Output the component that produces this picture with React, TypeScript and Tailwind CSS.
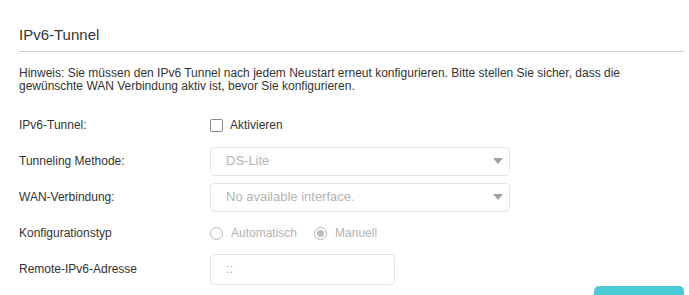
const font = { fontFamily: '"Liberation Sans", Arial, sans-serif' };

function Caret() {
    return (
        <svg width="10" height="6" viewBox="0 0 10 6" className="absolute right-[6px] top-1/2 -translate-y-1/2">
            <path d="M0 0h10L5 6z" fill="#a0a0a0" />
        </svg>
    );
}

function Select({ value }: { value: string }) {
    return (
        <div className="relative flex h-[29px] w-[300px] items-center rounded-[4px] border border-[#e4e4e4] pl-[15px] text-[13px] text-[#b3b3b3]">
            {value}
            <Caret />
        </div>
    );
}

function Radio({ checked, label }: { checked?: boolean; label: string }) {
    return (
        <label className="flex items-center gap-[8px] text-[12px] text-[#b3b3b3]">
            <span className="flex h-[13px] w-[13px] items-center justify-center rounded-full border border-[#b9b9b9]">
                {checked && <span className="h-[7px] w-[7px] rounded-full bg-[#bdbdbd]" />}
            </span>
            {label}
        </label>
    );
}

function Row({ label, children }: { label: string; children: React.ReactNode }) {
    return (
        <div className="flex h-[36px] items-center">
            <div className="w-[191px] text-[12px] text-[#333]">{label}</div>
            {children}
        </div>
    );
}

export default function App() {
    return (
        <div className="relative h-[295px] w-[689px] overflow-hidden bg-white pl-[19px] pr-[5px]" style={font}>
            <div className="border-b border-[#cccccc] pb-[6px] pt-[25px] text-[15px] leading-[20px] text-[#333]">
                IPv6-Tunnel
            </div>
            <p className="mt-[15px] text-[12px] leading-[13px] text-[#333]">
                Hinweis: Sie müssen den IPv6 Tunnel nach jedem Neustart erneut konfigurieren. Bitte stellen Sie sicher, dass die
                <br />
                gewünschte WAN Verbindung aktiv ist, bevor Sie konfigurieren.
            </p>
            <div className="mt-[14px]">
                <Row label="IPv6-Tunnel:">
                    <label className="flex items-center gap-[7px] text-[12px] text-[#333]">
                        <span className="h-[13px] w-[13px] rounded-[2px] border border-[#8a8a8a]" />
                        Aktivieren
                    </label>
                </Row>
                <Row label="Tunneling Methode:">
                    <Select value="DS-Lite" />
                </Row>
                <Row label="WAN-Verbindung:">
                    <Select value="No available interface." />
                </Row>
                <Row label="Konfigurationstyp">
                    <div className="flex items-center gap-[17px]">
                        <Radio label="Automatisch" />
                        <Radio checked label="Manuell" />
                    </div>
                </Row>
                <Row label="Remote-IPv6-Adresse">
                    <div className="flex h-[31px] w-[185px] items-center rounded-[4px] border border-[#e4e4e4] pl-[15px] text-[13px] text-[#b3b3b3]">
                        ::
                    </div>
                </Row>
            </div>
            <button className="absolute left-[594px] top-[286px] h-[30px] w-[90px] rounded-[5px] bg-[#4acbd6]" />
        </div>
    );
}
